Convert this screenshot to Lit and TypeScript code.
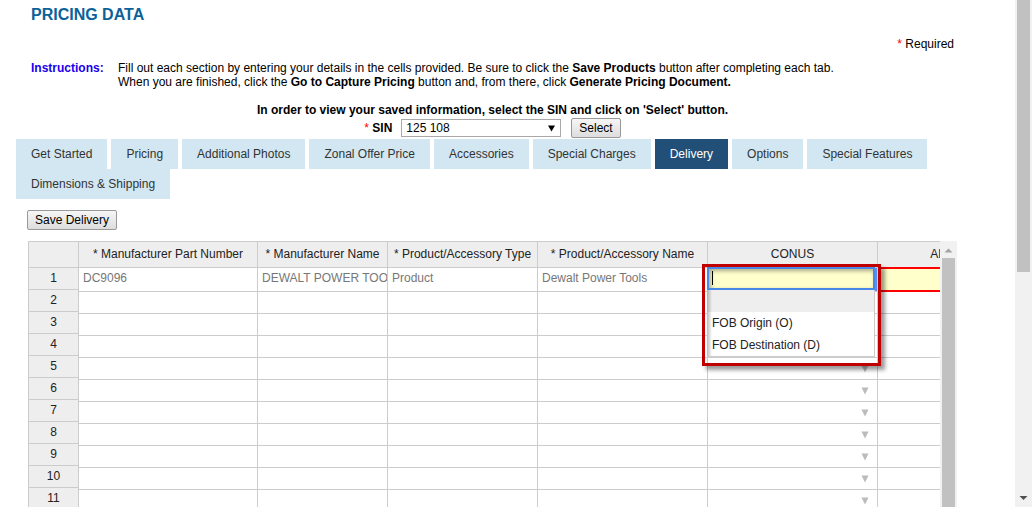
import { LitElement, html, css, nothing } from "lit";
import { customElement, state } from "lit/decorators.js";

const TABS = [
  "Get Started", "Pricing", "Additional Photos", "Zonal Offer Price", "Accessories",
  "Special Charges", "Delivery", "Options", "Special Features", "Dimensions & Shipping",
];

const COLUMNS = [
  { label: "* Manufacturer Part Number", cls: "w-part" },
  { label: "* Manufacturer Name", cls: "w-maker" },
  { label: "* Product/Accessory Type", cls: "w-type" },
  { label: "* Product/Accessory Name", cls: "w-wide" },
  { label: "CONUS", cls: "w-wide" },
  { label: "ALASKA", cls: "w-last" },
];

const PRODUCTS = [["DC9096", "DEWALT POWER TOO", "Product", "Dewalt Power Tools"]];
const ROWS = Array.from({ length: 11 }, (_, i) => i + 1);

@customElement("scroll-rail")
class ScrollRail extends LitElement {
  static styles = css`
    :host { display: flex; flex-direction: column; align-items: center; background: #f1f1f1; }
    .thumb { width: 13px; background: #c1c1c1; flex: 1; }
    svg { display: block; }
    :host([kind="page"]) .thumb { flex: 0 0 272px; }
    :host([kind="page"]) { justify-content: space-between; }
  `;
  render() {
    const page = this.getAttribute("kind") === "page";
    return html`
      ${page ? nothing : html`<svg width="17" height="17" viewBox="0 0 17 17"><path d="M4.5 11.5 8.5 7.5 12.5 11.5z" fill="#a3a3a3"/></svg>`}
      <div class="thumb"></div>
      ${page ? html`<svg width="17" height="17" viewBox="0 0 17 17"><path d="M4.5 6 12.5 6 8.5 10z" fill="#505050"/></svg>` : nothing}
    `;
  }
}

@customElement("delivery-grid")
class DeliveryGrid extends LitElement {
  static styles = css`
    :host { display: flex; color: #222; }
    .clip { flex: 1; min-width: 0; overflow: hidden; display: flex; align-items: flex-start; }
    table { border-collapse: separate; border-spacing: 0; table-layout: fixed; flex: none; }
    .numbers { width: 51px; }
    .data { width: 951px; }
    .w-part { width: 179px; }
    .w-maker { width: 130px; }
    .w-type { width: 150px; }
    .w-wide { width: 170px; }
    .w-last { width: 152px; }
    th, td {
      box-sizing: border-box; height: 22px; padding: 0 4px; line-height: 21px;
      border: 0 solid #ccc; border-width: 0 1px 1px 0; vertical-align: top;
      font-weight: normal; white-space: nowrap; overflow: hidden;
    }
    th { background: #eee; text-align: center; }
    thead th { height: 27px; border-top-width: 1px; line-height: 25px; }
    .numbers th { border-left-width: 1px; }
    .data tbody tr:first-child td { height: 24px; }
    .readonly { color: #777; }
    .arrow { text-align: right; padding-right: 8px; }
    .arrow svg { vertical-align: -1px; }
    .invalid { background: #ffc; border-bottom-color: red; box-shadow: 0 -1px red, inset 0 1px red, inset 0 -1px red; }
    .editing { position: relative; overflow: visible; box-shadow: inset -2px 0 #5292f7; }
    .editor {
      position: absolute; left: -1px; top: -1px; box-sizing: border-box; width: 168px; height: 23px;
      border: 2px solid #4a88e8; background: #ffc; padding: 0 2px; font: inherit;
      outline: none; border-radius: 0; box-shadow: inset 2px 2px 4px #0005; caret-color: transparent;
    }
    .caret { position: absolute; left: 4px; top: 3px; width: 1px; height: 14px; background: #000; }
    .choices {
      position: absolute; left: -1px; top: 22px; box-sizing: border-box; width: 168px;
      margin: 0; padding: 0; list-style: none;
      border: solid #ccc; border-width: 0 1px 1px 0;
      background: linear-gradient(90deg, #0004, #0000 5px) #fff;
    }
    .choices li { height: 22px; line-height: 22px; padding: 0 5px; }
    .choices .current { background: linear-gradient(90deg, #0004, #0000 5px) #eee; }
    .frame {
      position: absolute; left: -6px; top: -4px; width: 173px; height: 96px;
      border: 3px solid #c00000; box-shadow: 4px 4px 4px #0006; pointer-events: none;
    }
  `;

  private cell(row: number, col: number) {
    const value = PRODUCTS[row - 1]?.[col];
    if (value) return html`<td class="readonly">${value}</td>`;
    if (row === 1 && col === 4)
      return html`<td class="editing">
        <input class="editor" type="text" aria-label="CONUS, row 1" />
        <span class="caret"></span>
        <ul class="choices" role="listbox" aria-label="CONUS">
          <li class="current" role="option"></li>
          <li role="option">FOB Origin (O)</li>
          <li role="option">FOB Destination (D)</li>
        </ul>
        <div class="frame"></div>
      </td>`;
    if (row === 1 && col === 5) return html`<td class="invalid"></td>`;
    if (col === 4)
      return html`<td class="arrow"><svg width="8" height="8" viewBox="0 0 8 8"><path d="M.5 .5h7L4 7.5z" fill="#bbb"/></svg></td>`;
    return html`<td></td>`;
  }

  render() {
    return html`
      <div class="clip">
        <table class="numbers">
          <thead><tr><th></th></tr></thead>
          <tbody>${ROWS.map((n) => html`<tr><th scope="row">${n}</th></tr>`)}</tbody>
        </table>
        <table class="data">
          <thead><tr>${COLUMNS.map((c) => html`<th scope="col" class=${c.cls}>${c.label}</th>`)}</tr></thead>
          <tbody>${ROWS.map((n) => html`<tr>${COLUMNS.map((_, i) => this.cell(n, i))}</tr>`)}</tbody>
        </table>
      </div>
      <scroll-rail></scroll-rail>
    `;
  }
}

@customElement("app-root")
class AppRoot extends LitElement {
  @state() private active = "Delivery";

  static styles = css`
    :host {
      display: flex; height: 100vh; overflow: hidden; background: #fff; color: #000;
      font: 12px/14px "Liberation Sans", Arial, sans-serif;
    }
    main { flex: 1; min-width: 0; padding: 7px 58px 0 16px; }
    .text { padding: 0 3px 0 15px; }
    h1 { margin: 0; font-size: 16px; line-height: 16px; color: #0b6299; }
    .required { margin: 14px 0 10px; text-align: right; }
    .star { color: red; }
    .instructions { display: flex; margin: 0; }
    .instructions dt { flex: none; width: 87px; font-weight: bold; color: #1a00ee; }
    .instructions dd { margin: 0; }
    .hint { margin: 14px 0 1px; text-align: center; font-weight: bold; }
    form { display: flex; align-items: center; justify-content: center; height: 20px; margin-bottom: 1px; }
    label { font-weight: bold; margin-right: 9px; }
    label .star { font-weight: normal; }
    .picker { display: grid; align-items: center; margin-right: 10px; }
    .picker > * { grid-area: 1 / 1; }
    .picker svg { justify-self: end; margin-right: 6px; pointer-events: none; }
    select {
      appearance: none; width: 160px; height: 18px; padding: 0 4px; border: 1px solid #a9a9a9;
      border-radius: 0; background: #fff; font: inherit; color: #000;
    }
    .push {
      box-sizing: border-box; height: 20px; padding: 0 7px; border: 1px solid #999; border-radius: 2px;
      background: linear-gradient(#f6f6f6, #ddd); font: inherit; color: #000;
    }
    nav { display: flex; flex-wrap: wrap; column-gap: 4px; }
    nav a { padding: 0 15px; line-height: 30px; background: #d2e7f2; color: #333; text-decoration: none; }
    nav .on { background: #224f77; color: #fff; }
    .save { margin: 11px 0 11px 11px; display: block; }
    delivery-grid { margin-left: 12px; }
  `;

  render() {
    return html`
      <main>
        <div class="text">
          <h1>PRICING DATA</h1>
          <p class="required"><span class="star">*</span> Required</p>
          <dl class="instructions">
            <dt>Instructions:</dt>
            <dd>
              Fill out each section by entering your details in the cells provided. Be sure to click the
              <b>Save Products</b> button after completing each tab.<br />When you are finished, click the
              <b>Go to Capture Pricing</b> button and, from there, click <b>Generate Pricing Document.</b>
            </dd>
          </dl>
          <p class="hint">In order to view your saved information, select the SIN and click on 'Select' button.</p>
          <form @submit=${(e: Event) => e.preventDefault()}>
            <label for="sin"><span class="star">*</span> SIN</label>
            <span class="picker">
              <select id="sin"><option>125 108</option></select>
              <svg width="7" height="7" viewBox="0 0 7 7"><path d="M0 .5h7L3.500 6.500z" fill="#000"/></svg>
            </span>
            <button class="push">Select</button>
          </form>
        </div>
        <nav>
          ${TABS.map((t) => html`<a href="#" class=${t === this.active ? "on" : ""}
            @click=${(e: Event) => { e.preventDefault(); this.active = t; }}>${t}</a>`)}
        </nav>
        <button class="push save">Save Delivery</button>
        <delivery-grid></delivery-grid>
      </main>
      <scroll-rail kind="page"></scroll-rail>
    `;
  }
}
